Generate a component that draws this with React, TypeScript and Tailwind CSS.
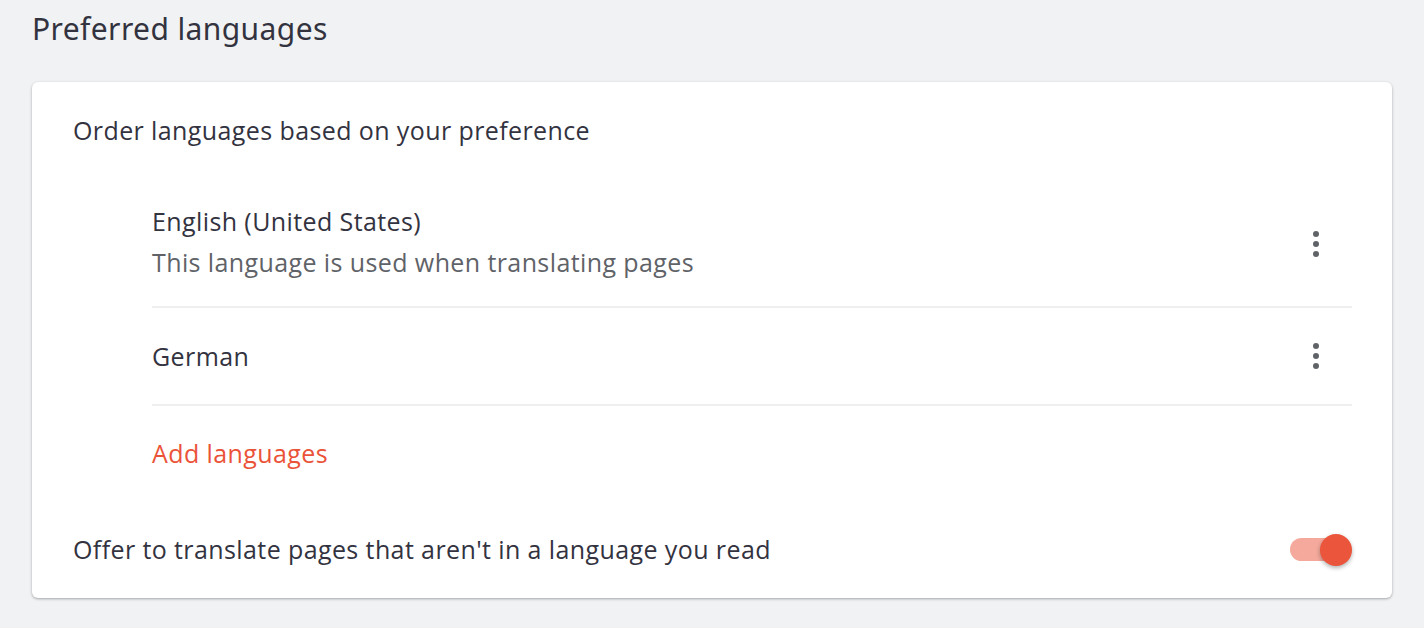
const languages = [
  { name: "English (United States)", note: "This language is used when translating pages" },
  { name: "German", note: "" },
];

function Kebab() {
  return (
    <button className="flex h-10 w-10 items-center justify-center text-[#5f6368]">
      <svg width="8" height="28" viewBox="0 0 8 28" fill="currentColor">
        <circle cx="4" cy="4" r="3" />
        <circle cx="4" cy="14" r="3" />
        <circle cx="4" cy="24" r="3" />
      </svg>
    </button>
  );
}

export default function App() {
  return (
    <div
      className="min-h-[628px] bg-[#f1f2f4] px-8 pt-[8px] text-[#33333f] tracking-[0.4px]"
      style={{ fontFamily: "'Open Sans', 'Noto Sans', sans-serif" }}
    >
      <h2 className="text-[30px] leading-[42px]" style={{ fontFamily: "'Noto Sans', sans-serif" }}>
        Preferred languages
      </h2>

      <div className="mt-[32px] rounded-md bg-white pb-[1px] shadow-[0_1px_3px_rgba(60,64,67,0.3),0_1px_2px_rgba(60,64,67,0.15)]">
        <div className="px-[41px] pt-[32px] text-[25px] leading-[32px]">Order languages based on your preference</div>

        <div className="ml-[120px] mr-[40px] mt-[35px]">
          {languages.map((lang) => (
            <div
              key={lang.name}
              className={`flex items-center justify-between border-b-2 border-[#efefef] ${lang.note ? "h-[127px]" : "h-[98px]"}`}
            >
              <div className={lang.note ? "pb-[4px]" : ""}>
                <div className="text-[25px] leading-[41px]">{lang.name}</div>
                {lang.note && <div className="text-[25px] leading-[41px] text-[#5f6368]">{lang.note}</div>}
              </div>
              <div className="mr-[16px]">
                <Kebab />
              </div>
            </div>
          ))}
          <div className="flex h-[96px] items-center text-[25px] text-[#eb5339]">Add languages</div>
        </div>

        <div className="flex h-[95px] items-center justify-between px-[40px]">
          <span className="ml-[1px] text-[25px]">Offer to translate pages that aren't in a language you read</span>
          <div className="relative flex h-8 w-[62px] items-center">
            <div className="h-[23px] w-[56px] rounded-full bg-[#f4a99c]" />
            <div className="absolute right-0 h-8 w-8 rounded-full bg-[#ea553b] shadow-[0_2px_4px_rgba(0,0,0,0.3)]" />
          </div>
        </div>
      </div>
    </div>
  );
}
